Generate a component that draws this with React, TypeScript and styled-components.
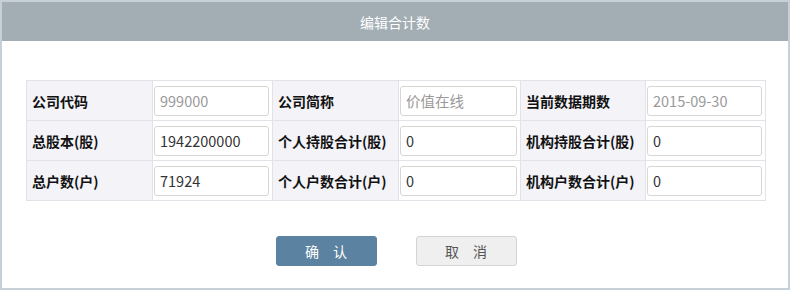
import React from "react";
import styled, { createGlobalStyle } from "styled-components";

const Global = createGlobalStyle`
  html, body { margin: 0; padding: 0; background: #fff; }
  body { font-family: "Noto Sans CJK SC", "Noto Sans", sans-serif; }
`;

const Window = styled.div`
  box-sizing: border-box;
  width: 790px;
  height: 290px;
  border: 2px solid #c8d0d7;
  background: #fff;
  display: flex;
  flex-direction: column;
`;

const Header = styled.div`
  height: 39px;
  background: #a2adb4;
  color: #fff;
  font-size: 14px;
  display: flex;
  align-items: center;
  justify-content: center;
`;

const Body = styled.div`
  padding: 39px 22px 0 24px;
  display: flex;
  flex-direction: column;
  align-items: stretch;
`;

const Table = styled.div`
  display: grid;
  grid-template-columns: 126px 120px 126px 122px 125px 120px;
  border-top: 1px solid #e2e2e8;
  border-left: 1px solid #e2e2e8;
  width: max-content;
`;

const Cell = styled.div<{ $label?: boolean }>`
  box-sizing: border-box;
  height: 40px;
  border-right: 1px solid #e2e2e8;
  border-bottom: 1px solid #e2e2e8;
  background: ${(p) => (p.$label ? "#f3f3f8" : "#fff")};
  display: flex;
  align-items: center;
  padding: ${(p) => (p.$label ? "0 0 0 5px" : "0 3px 0 1px")};
  font-size: 14px;
  font-weight: 700;
  color: #111;
  white-space: nowrap;
`;

const Input = styled.input<{ $muted?: boolean }>`
  box-sizing: border-box;
  width: 100%;
  height: 30px;
  border: 1px solid #d6d6d6;
  border-radius: 3px;
  padding: 0 5px;
  font-family: "Noto Sans CJK SC", "Noto Sans", sans-serif;
  font-size: 14.5px;
  color: ${(p) => (p.$muted ? "#999" : "#333")};
  background: #fff;
  outline: none;
`;

const Actions = styled.div`
  display: flex;
  justify-content: center;
  gap: 39px;
  margin-top: 35px;
`;

const Button = styled.button<{ $primary?: boolean }>`
  width: 101px;
  height: 30px;
  border-radius: 3px;
  border: 1px solid ${(p) => (p.$primary ? "#5a82a0" : "#d4d4d4")};
  background: ${(p) => (p.$primary ? "#5b83a1" : "#efefef")};
  color: ${(p) => (p.$primary ? "#fff" : "#555")};
  font-family: "Noto Sans CJK SC", "Noto Sans", sans-serif;
  font-size: 14px;
  letter-spacing: 14px;
  text-indent: 14px;
  padding: 0;
`;

type Field = { label: string; value: string; muted?: boolean };

const rows: Field[][] = [
  [
    { label: "公司代码", value: "999000", muted: true },
    { label: "公司简称", value: "价值在线", muted: true },
    { label: "当前数据期数", value: "2015-09-30", muted: true },
  ],
  [
    { label: "总股本(股)", value: "1942200000" },
    { label: "个人持股合计(股)", value: "0" },
    { label: "机构持股合计(股)", value: "0" },
  ],
  [
    { label: "总户数(户)", value: "71924" },
    { label: "个人户数合计(户)", value: "0" },
    { label: "机构户数合计(户)", value: "0" },
  ],
];

export default function App() {
  return (
    <>
      <Global />
      <Window>
        <Header>编辑合计数</Header>
        <Body>
          <Table>
            {rows.map((r) =>
              r.map((f) => (
                <React.Fragment key={f.label}>
                  <Cell $label>{f.label}</Cell>
                  <Cell>
                    <Input $muted={f.muted} readOnly={f.muted} defaultValue={f.value} />
                  </Cell>
                </React.Fragment>
              ))
            )}
          </Table>
          <Actions>
            <Button $primary>确认</Button>
            <Button>取消</Button>
          </Actions>
        </Body>
      </Window>
    </>
  );
}
